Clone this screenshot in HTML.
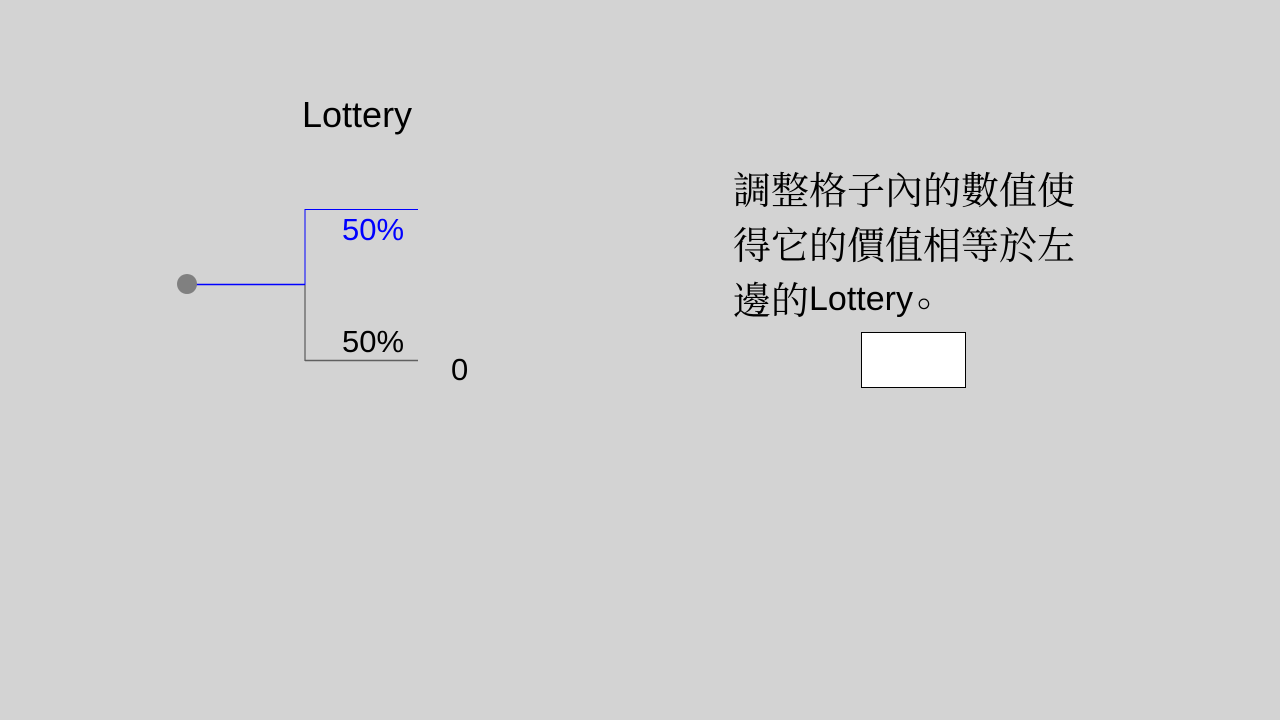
<!DOCTYPE html>
<html><head><meta charset="utf-8"><style>
body{margin:0;width:1280px;height:720px;background:#d3d3d3;position:relative;overflow:hidden;font-family:"Liberation Sans","Noto Sans CJK TC",sans-serif}
.a{position:absolute;white-space:nowrap}
</style></head><body>
<div class="a" style="left:302px;top:94px;font-size:36px;color:#000">Lottery</div>
<svg class="a" style="left:0;top:0" width="1280" height="720">
<line x1="187" y1="284.5" x2="305" y2="284.5" stroke="#0000ff" stroke-width="1.5"/>
<line x1="305" y1="209" x2="305" y2="285" stroke="#0000ff" stroke-width="1"/>
<line x1="305" y1="209.5" x2="418" y2="209.5" stroke="#0000ff" stroke-width="1"/>
<line x1="305" y1="285" x2="305" y2="361" stroke="#404040" stroke-width="1"/>
<line x1="305" y1="360.5" x2="418" y2="360.5" stroke="#606060" stroke-width="1.5"/>
<circle cx="187" cy="284" r="10" fill="#808080"/>
</svg>
<div class="a" style="left:342px;top:212px;font-size:31px;color:#0000ff">50%</div>
<div class="a" style="left:342px;top:324px;font-size:31px;color:#000">50%</div>
<div class="a" style="left:451px;top:352px;font-size:31px;color:#000">0</div>
<div class="a" style="left:733px;top:160px;font-size:38px;line-height:55px;color:#000;font-family:'Noto Serif CJK SC','Noto Sans CJK TC',serif">調整格子內的數值使<br>得它的價值相等於左<br>邊的<span style="font-family:'Liberation Sans',sans-serif;font-size:34px;position:relative;top:-4px">Lottery</span><span style="position:relative;top:-8px;margin-left:4px">。</span></div>
<div class="a" style="left:861px;top:332px;width:103px;height:54px;background:#fff;border:1px solid #000"></div>
</body></html>
